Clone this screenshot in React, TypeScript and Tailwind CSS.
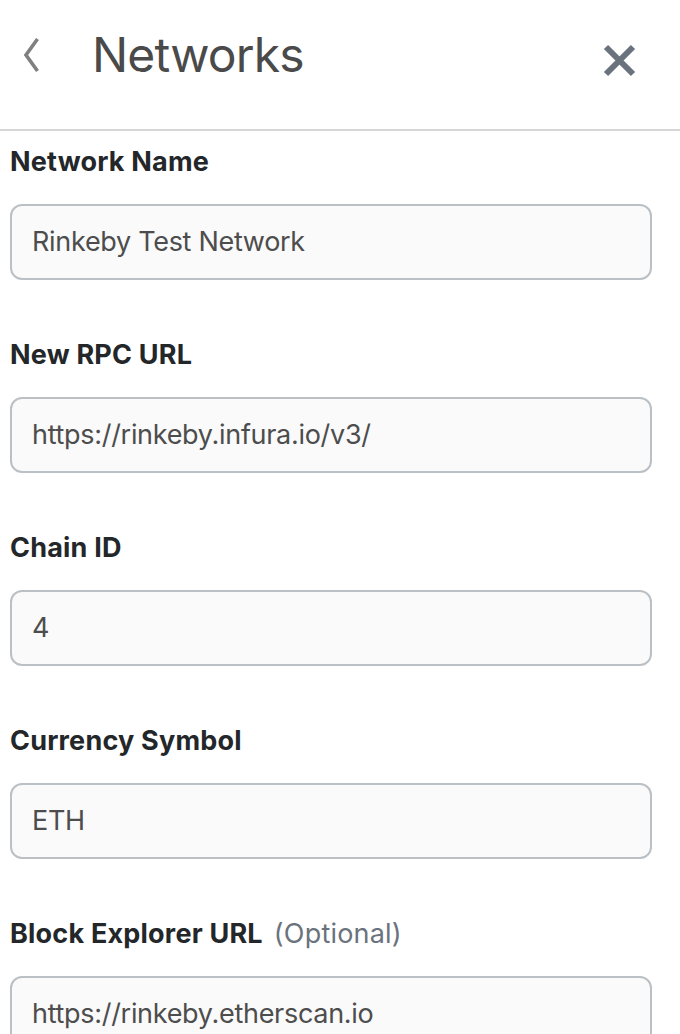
const fields = [
  { label: 'Network Name', value: 'Rinkeby Test Network' },
  { label: 'New RPC URL', value: 'https://rinkeby.infura.io/v3/' },
  { label: 'Chain ID', value: '4' },
  { label: 'Currency Symbol', value: 'ETH' },
  { label: 'Block Explorer URL', value: 'https://rinkeby.etherscan.io', optional: true },
];

export default function App() {
  return (
    <div className="w-[680px] h-[1034px] overflow-hidden bg-white font-['Inter',sans-serif]">
      {/* Header */}
      <div className="h-[131px] flex items-start border-b-2 border-[#d6d6d6] pl-[23px] pr-[44px]">
        <button type="button" className="mt-[37px]" aria-label="Back">
          <svg width="18" height="36" viewBox="0 0 18 36" fill="none">
            <path d="M14.5 2L3 18L14.5 34" stroke="#808080" strokeWidth="3.6" strokeLinejoin="miter" />
          </svg>
        </button>
        <h1 className="ml-[51px] mt-[31px] text-[48px] leading-none text-[#4a4a4a] tracking-[-0.8px]">
          Networks
        </h1>
        <button type="button" className="ml-auto mt-[44px]" aria-label="Close">
          <svg width="33" height="33" viewBox="0 0 33 33" fill="none">
            <path d="M3 3L30 30M30 3L3 30" stroke="#6a737d" strokeWidth="6" />
          </svg>
        </button>
      </div>

      {/* Form */}
      <div className="flex flex-col gap-[57px] pl-[10px] pr-[28px] pt-[13px]">
        {fields.map((f) => (
          <div key={f.label} className="flex flex-col gap-[24px]">
            <label className="text-[27px] leading-[36px] font-bold text-[#24272a] tracking-[0.2px]">
              {f.label}
              {f.optional && (
                <span className="ml-[11px] font-normal text-[#6a737d]">(Optional)</span>
              )}
            </label>
            <div className="h-[76px] rounded-[12px] border-2 border-[#bbc0c5] bg-[#fafafa] flex items-center px-[20px]">
              <span className="text-[27px] text-[#4d4d4d] tracking-[-0.3px]">{f.value}</span>
            </div>
          </div>
        ))}
      </div>
    </div>
  );
}
